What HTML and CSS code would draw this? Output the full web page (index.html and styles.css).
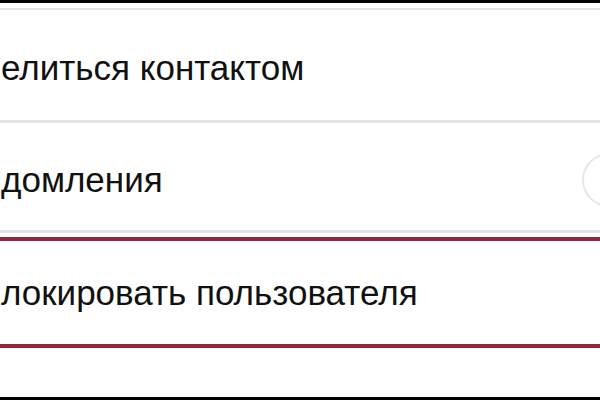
FILE: index.html
```html
<!DOCTYPE html>
<html lang="ru">
<head>
<meta charset="utf-8">
<link rel="stylesheet" href="styles.css">
</head>
<body>
<div class="screen">
  <div class="bar"></div>
  <div class="gap-top"></div>
  <div class="sep"></div>
  <div class="row row-1"><span class="label">елиться контактом</span></div>
  <div class="sep sep-thick"></div>
  <div class="row row-2">
    <span class="label">домления</span>
    <span class="switch"></span>
  </div>
  <div class="sep sep-thick"></div>
  <div class="gap-small"></div>
  <div class="row row-3 highlighted"><span class="label">локировать пользователя</span></div>
  <div class="filler"></div>
  <div class="bar"></div>
</div>
</body>
</html>
```

FILE: styles.css
```css
html, body {
  margin: 0;
  padding: 0;
  background: #ffffff;
}

.screen {
  width: 600px;
  height: 400px;
  display: flex;
  flex-direction: column;
  overflow: hidden;
  background: #ffffff;
  font-family: "Liberation Sans", Arial, sans-serif;
  color: #111111;
}

.bar {
  height: 3px;
  background: #000000;
  flex: none;
}

.gap-top {
  height: 5px;
  flex: none;
}

.gap-small {
  height: 4px;
  flex: none;
}

.sep {
  height: 2px;
  background: #e4e4e4;
  flex: none;
}

.sep-thick {
  height: 3px;
}

.row {
  display: flex;
  align-items: center;
  justify-content: space-between;
  overflow: hidden;
  flex: none;
  background: #ffffff;
}

.row-1 {
  height: 110px;
  padding-top: 4px;
  box-sizing: border-box;
}

.row-2 {
  height: 107px;
  padding-top: 6px;
  box-sizing: border-box;
}

.row-3 {
  height: 111px;
  box-sizing: border-box;
}

.highlighted {
  border-top: 4px solid #93243a;
  border-bottom: 4px solid #93243a;
}

.label {
  font-size: 35px;
  line-height: 1;
  padding-left: 1px;
  white-space: nowrap;
}

.switch {
  width: 60px;
  height: 50px;
  margin-right: -46px;
  border: 2px solid #e6e6e6;
  border-radius: 27px;
  flex: none;
}

.filler {
  flex: 1;
}
```
